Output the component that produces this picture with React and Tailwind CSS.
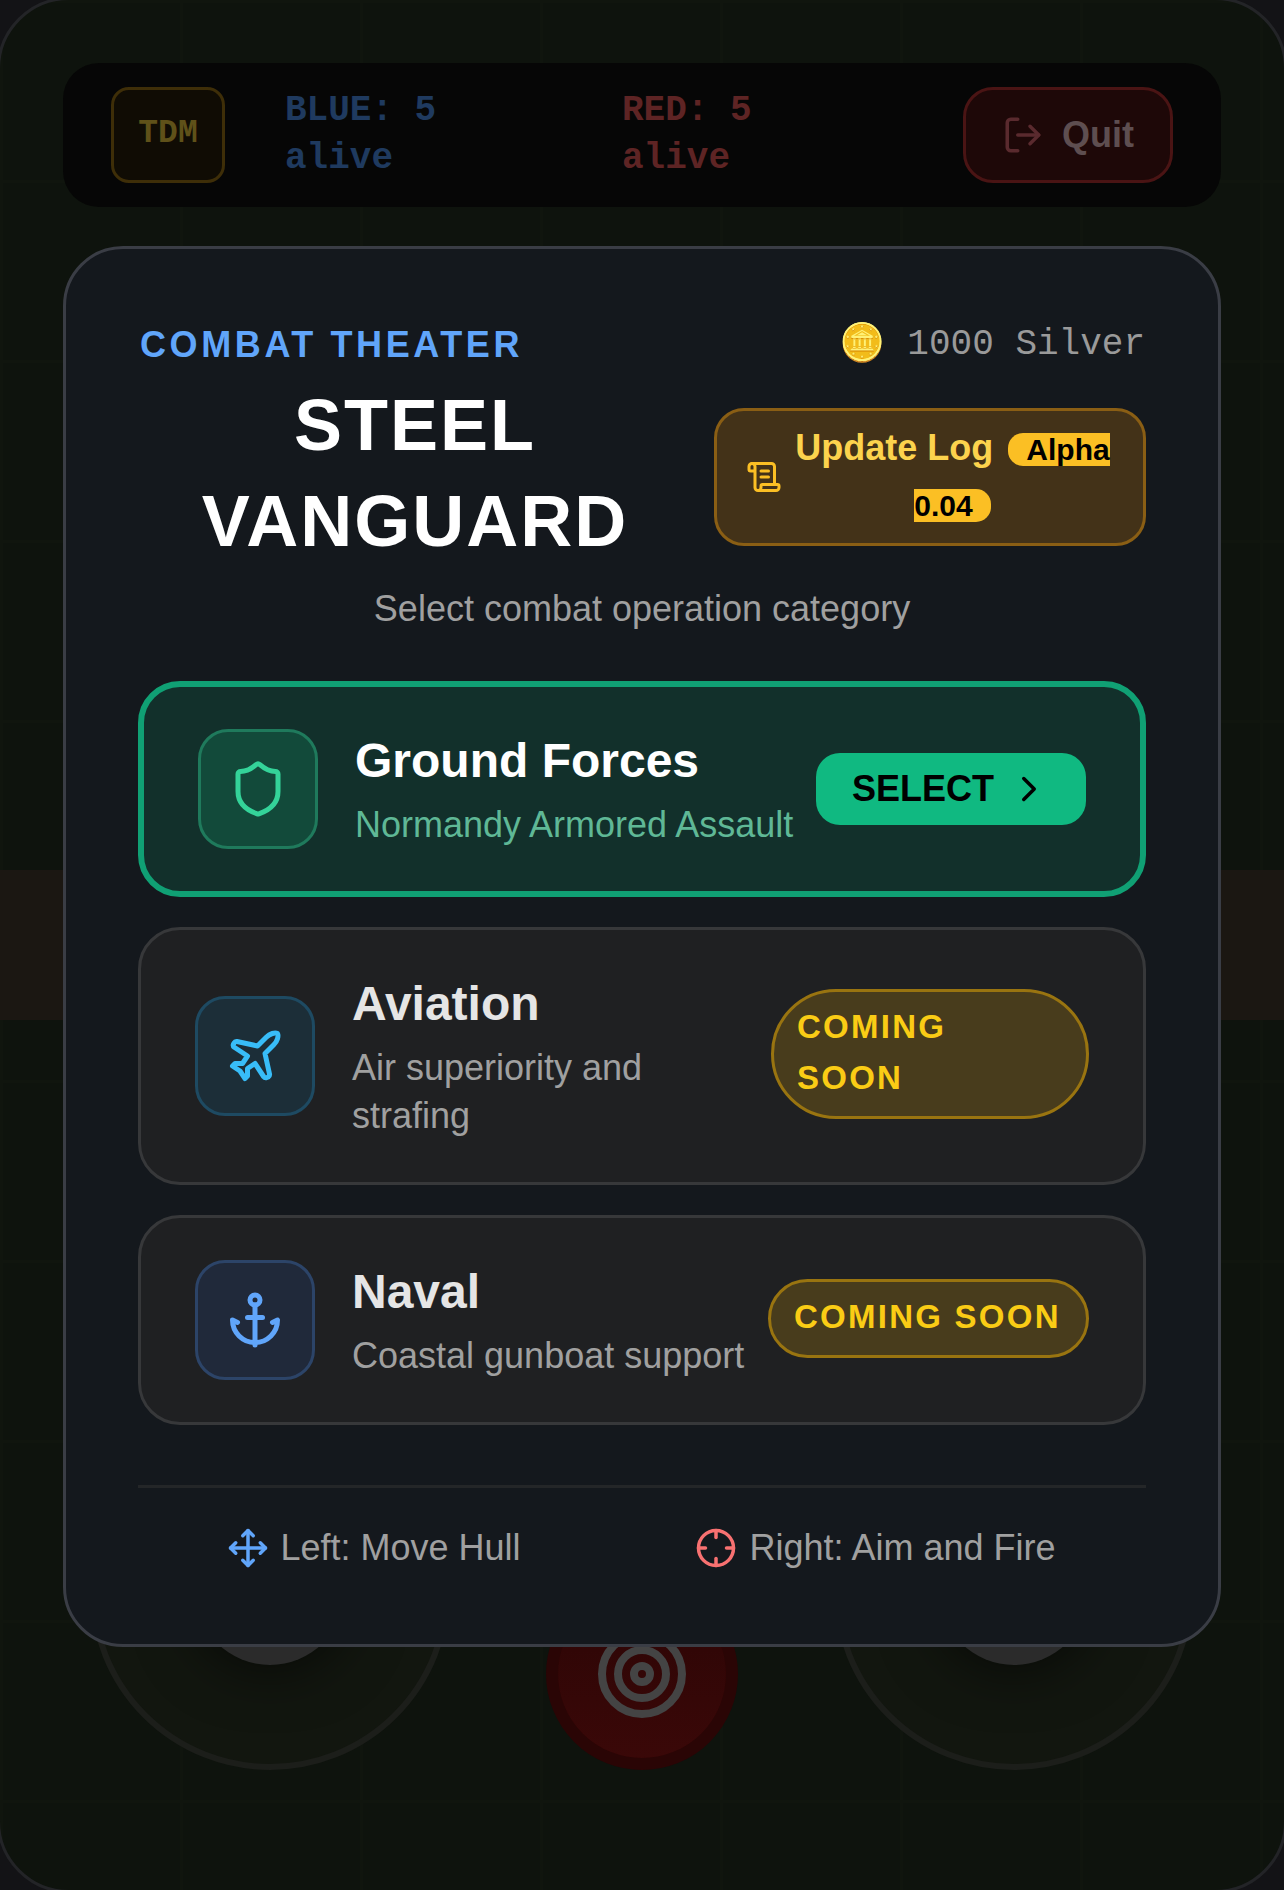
import { Shield, Plane, Anchor, Move, Crosshair, ChevronRight, ScrollText, LogOut, Target } from 'lucide-react';

function ModeCard({ icon: Icon, iconBox, iconColor, title, sub, badgeWidth }) {
  return (
    <div className="flex items-center justify-between gap-[18px] rounded-[42px] border-[3px] border-[#37383a] bg-[#1f2022] px-[54px] py-[42px]">
      <div className="flex items-center gap-[37px]">
        <div className={`flex h-[120px] w-[120px] shrink-0 items-center justify-center rounded-[30px] border-[3px] ${iconBox}`}>
          <Icon size={60} className={iconColor} />
        </div>
        <div>
          <h3 className="mb-[8px] text-[48px] leading-[64px] font-bold text-[#e5e5e5]">{title}</h3>
          <p className="text-[36px] leading-[48px] text-[#a0a0a0]">{sub}</p>
        </div>
      </div>
      <span className={`${badgeWidth} -mt-[4px] shrink-0 rounded-full border-[3px] border-[#997410] bg-[#483c1c] px-[23px] pt-[9px] pb-[13px] text-[33px] leading-[51px] font-bold tracking-[2.25px] text-[#facc15]`}>
        COMING SOON
      </span>
    </div>
  );
}

export default function App() {
  return (
    <div className="relative h-[1890px] w-[1284px] overflow-hidden bg-[#131316] font-['Liberation_Sans',sans-serif]">
      {/* game behind the menu */}
      <div className="relative -m-[3px] flex h-[1896px] w-[1290px] flex-col justify-between rounded-[72px] border-[3px] border-[#232427] bg-[#0e130d] bg-[linear-gradient(#10150e_3px,transparent_3px),linear-gradient(90deg,#10150e_3px,transparent_3px)] bg-[size:180px_180px]">
        <div className="mx-[63px] mt-[63px] flex h-[144px] items-center rounded-[36px] bg-[#060606] px-[48px]">
          <div className="flex h-[96px] w-[114px] shrink-0 justify-center rounded-[18px] border-[3px] border-[#3e2e08] bg-[#100c04] pt-[20px] font-['Liberation_Mono',monospace] text-[33px] leading-[48px] font-bold text-[#5f5119]">
            TDM
          </div>
          <div className="ml-[60px] w-[337px] font-['Liberation_Mono',monospace] text-[36px] leading-[48px] font-bold text-[#1f3a5f]">
            BLUE: 5<br />alive
          </div>
          <div className="font-['Liberation_Mono',monospace] text-[36px] leading-[48px] font-bold text-[#5e2424]">
            RED: 5<br />alive
          </div>
          <div className="ml-auto flex h-[96px] w-[210px] items-center justify-center gap-[18px] rounded-[30px] border-[3px] border-[#4a1414] bg-[#1e0808] text-[36px] font-bold text-[#5e4e50]">
            <LogOut size={42} className="text-[#5a2a2e]" />
            Quit
          </div>
        </div>

        <div className="mb-[120px] flex items-end justify-between px-[90px]">
          <div className="flex h-[360px] w-[360px] items-center justify-center rounded-full border-[6px] border-[#1c1e1a] bg-[#12160f]">
            <div className="h-[150px] w-[150px] rounded-full bg-[#2b2b2b] shadow-[0_0_60px_rgba(0,0,0,0.7)]" />
          </div>
          <div className="flex h-[192px] w-[192px] items-center justify-center rounded-full border-[12px] border-[#2a0505] bg-[linear-gradient(#2c0505,#3a0808)]">
            <Target size={96} className="text-[#444444]" />
          </div>
          <div className="flex h-[360px] w-[360px] items-center justify-center rounded-full border-[6px] border-[#1c1e1a] bg-[#12160f]">
            <div className="h-[150px] w-[150px] rounded-full bg-[#2b2b2b] shadow-[0_0_60px_rgba(0,0,0,0.7)]" />
          </div>
        </div>
      </div>

      {/* road band */}
      <div className="absolute top-[870px] left-0 h-[150px] w-full bg-[#1b1712]" />

      {/* menu */}
      <div className="absolute top-[246px] left-[63px] h-[1401px] w-[1158px] rounded-[60px] border-[3px] border-[#3a3d45] bg-[#14181d] px-[72px] pt-[72px]">
        <div className="flex h-[56px] items-start justify-between">
          <span className="ml-[2px] text-[36px] leading-[48px] font-bold tracking-[3.6px] text-[#60a5fa]">COMBAT THEATER</span>
          <div className="mr-[1px] flex items-center gap-[22px] font-['Liberation_Mono',monospace] text-[36px] leading-[48px] text-[#9a9a9a]">
            <span className="text-[37px]">🪙</span>
            <span>1000 Silver</span>
          </div>
        </div>

        <div className="flex items-start gap-[24px]">
          <h1 className="flex-1 pl-[2px] text-center text-[72px] leading-[96px] font-bold tracking-[2px] text-white">
            STEEL VANGUARD
          </h1>
          <div className="mt-[31px] flex h-[138px] w-[432px] shrink-0 items-center gap-[10px] rounded-[30px] border-[3px] border-[#8a5e14] bg-[#433218] pr-[30px] pl-[29px]">
            <ScrollText size={36} className="shrink-0 text-[#fbbf24]" />
            <p className="flex-1 text-center text-[36px] leading-[54px] font-bold text-[#fcd34d]">
              Update Log{' '}
              <span className="ml-[5px] rounded-[15px] bg-[#fbbf24] px-[18px] text-[30px] text-black">Alpha 0.04</span>
            </p>
          </div>
        </div>

        <p className="mt-[13px] mb-[45px] text-center text-[36px] leading-[54px] text-[#a0a0a0]">
          Select combat operation category
        </p>

        <div className="flex flex-col gap-[30px]">
          <div className="flex items-center justify-between rounded-[42px] border-[6px] border-[#10a074] bg-[#12302b] px-[54px] py-[42px]">
            <div className="flex items-center gap-[37px]">
              <div className="flex h-[120px] w-[120px] shrink-0 items-center justify-center rounded-[30px] border-[3px] border-[#1f7a5c] bg-[#124a3a]">
                <Shield size={60} className="text-[#34d399]" />
              </div>
              <div>
                <h3 className="mb-[8px] text-[48px] leading-[64px] font-bold text-white">Ground Forces</h3>
                <p className="text-[36px] leading-[48px] text-[#5fb896]">Normandy Armored Assault</p>
              </div>
            </div>
            <button className="flex h-[72px] w-[270px] shrink-0 items-center gap-[14px] rounded-[24px] bg-[#10b981] pl-[36px] text-[36px] font-bold text-black">
              SELECT
              <ChevronRight size={42} />
            </button>
          </div>

          <ModeCard
            icon={Plane}
            iconBox="border-[#1e4a62] bg-[#1c2e38]"
            iconColor="text-[#38bdf8]"
            title="Aviation"
            sub="Air superiority and strafing"
            badgeWidth="w-[318px]"
          />
          <ModeCard
            icon={Anchor}
            iconBox="border-[#2c4468] bg-[#20293a]"
            iconColor="text-[#60a5fa]"
            title="Naval"
            sub="Coastal gunboat support"
            badgeWidth="w-[321px] whitespace-nowrap"
          />
        </div>

        <div className="mt-[60px] flex justify-around border-t-[3px] border-[#242628] pt-[33px] text-[36px] text-[#a0a0a0]">
          <div className="ml-[2px] flex items-center gap-[11px]">
            <Move size={42} className="text-[#60a5fa]" />
            Left: Move Hull
          </div>
          <div className="mr-[3px] flex items-center gap-[12px]">
            <Crosshair size={42} className="text-[#f87171]" />
            Right: Aim and Fire
          </div>
        </div>
      </div>
    </div>
  );
}
